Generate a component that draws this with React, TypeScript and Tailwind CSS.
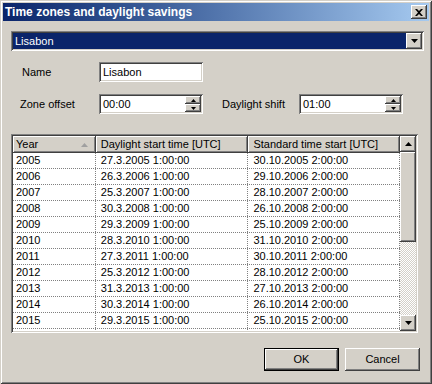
import React from 'react';

const raised =
  'shadow-[inset_-1px_-1px_#404040,inset_1px_1px_#ffffff,inset_-2px_-2px_#808080,inset_2px_2px_#d4d0c8]';
const sunken =
  'shadow-[inset_1px_1px_#808080,inset_-1px_-1px_#ffffff,inset_2px_2px_#404040,inset_-2px_-2px_#d4d0c8]';

const rows = [
  ['2005', '27.3.2005 1:00:00', '30.10.2005 2:00:00'],
  ['2006', '26.3.2006 1:00:00', '29.10.2006 2:00:00'],
  ['2007', '25.3.2007 1:00:00', '28.10.2007 2:00:00'],
  ['2008', '30.3.2008 1:00:00', '26.10.2008 2:00:00'],
  ['2009', '29.3.2009 1:00:00', '25.10.2009 2:00:00'],
  ['2010', '28.3.2010 1:00:00', '31.10.2010 2:00:00'],
  ['2011', '27.3.2011 1:00:00', '30.10.2011 2:00:00'],
  ['2012', '25.3.2012 1:00:00', '28.10.2012 2:00:00'],
  ['2013', '31.3.2013 1:00:00', '27.10.2013 2:00:00'],
  ['2014', '30.3.2014 1:00:00', '26.10.2014 2:00:00'],
  ['2015', '29.3.2015 1:00:00', '25.10.2015 2:00:00'],
  ['', '', ''],
];

function Arrow({ up = false, color = '#000' }: { up?: boolean; color?: string }) {
  return (
    <svg width="7" height="4" viewBox="0 0 7 4">
      <path d={up ? 'M3.5 0 L7 4 L0 4 Z' : 'M0 0 L7 0 L3.5 4 Z'} fill={color} />
    </svg>
  );
}

function Spin() {
  return (
    <div className="flex flex-col ml-auto mr-[2px]">
      <div className={`w-[16px] h-[8px] bg-[#d4d0c8] flex items-center justify-center ${raised}`}>
        <svg width="5" height="3" viewBox="0 0 5 3"><path d="M2.5 0 L5 3 L0 3 Z" fill="#000" /></svg>
      </div>
      <div className={`w-[16px] h-[8px] bg-[#d4d0c8] flex items-center justify-center ${raised}`}>
        <svg width="5" height="3" viewBox="0 0 5 3"><path d="M0 0 L5 0 L2.5 3 Z" fill="#000" /></svg>
      </div>
    </div>
  );
}

function Field({ value, spin = false }: { value: string; spin?: boolean }) {
  return (
    <div className={`w-[104px] h-[20px] bg-white flex items-center pl-[4px] ${sunken}`}>
      <span>{value}</span>
      {spin && <Spin />}
    </div>
  );
}

export default function App() {
  return (
    <div
      className="w-[432px] h-[384px] bg-[#d4d0c8] p-[3px] text-[11px] leading-none text-black shadow-[inset_1px_1px_#d4d0c8,inset_-1px_-1px_#404040,inset_2px_2px_#ffffff,inset_-2px_-2px_#808080] overflow-hidden"
      style={{ fontFamily: '"Liberation Sans", Arial, sans-serif' }}
    >
      {/* title bar */}
      <div className="h-[18px] flex items-center bg-gradient-to-r from-[#0a246a] to-[#a6caf0] pl-[2px] pr-[2px]">
        <span className="text-white font-bold text-[12px]">Time zones and daylight savings</span>
        <div className={`ml-auto w-[16px] h-[14px] bg-[#d4d0c8] flex items-center justify-center ${raised}`}>
          <svg width="8" height="7" viewBox="0 0 8 7">
            <path d="M0 0 H2 L4 2 L6 0 H8 L5 3.5 L8 7 H6 L4 5 L2 7 H0 L3 3.5 Z" fill="#000" />
          </svg>
        </div>
      </div>

      {/* zone combo */}
      <div className={`mt-[10px] ml-[8px] w-[413px] h-[20px] bg-white flex items-center p-[2px] ${sunken}`}>
        <div className="flex-1 h-full bg-[#0a246a] text-white flex items-center pl-[2px]">Lisabon</div>
        <div className={`w-[16px] h-[16px] bg-[#d4d0c8] flex items-center justify-center ${raised}`}>
          <Arrow />
        </div>
      </div>

      {/* fields */}
      <div className="flex items-center mt-[11px] ml-[19px]">
        <span className="w-[77px]">Name</span>
        <Field value="Lisabon" />
      </div>
      <div className="flex items-center mt-[12px] ml-[17px]">
        <span className="w-[79px]">Zone offset</span>
        <Field value="00:00" spin />
        <span className="ml-[19px] w-[77px]">Daylight shift</span>
        <Field value="01:00" spin />
      </div>

      {/* table */}
      <div className={`mt-[20px] ml-[8px] w-[407px] h-[199px] bg-white p-[2px] flex ${sunken}`}>
        <div className="flex-1 flex flex-col overflow-hidden">
          <div className="flex h-[17px] shrink-0">
            <div className={`w-[83px] bg-[#d4d0c8] flex items-center pl-[3px] pr-[8px] ${raised}`}>
              <span>Year</span>
              <span className="ml-auto"><Arrow up color="#a0a0a0" /></span>
            </div>
            <div className={`w-[153px] bg-[#d4d0c8] flex items-center pl-[5px] ${raised}`}>Daylight start time [UTC]</div>
            <div className={`w-[152px] bg-[#d4d0c8] flex items-center pl-[5px] ${raised}`}>Standard time start [UTC]</div>
          </div>
          {rows.map((r, i) => (
            <div key={i} className="flex h-[16px] shrink-0 border-b border-dotted border-[#808080]">
              <div className="w-[83px] pl-[3px] flex items-center border-r border-dotted border-[#808080]">{r[0]}</div>
              <div className="w-[153px] pl-[5px] flex items-center border-r border-dotted border-[#808080]">{r[1]}</div>
              <div className="w-[152px] pl-[5px] flex items-center border-r border-dotted border-[#808080]">{r[2]}</div>
            </div>
          ))}
        </div>
        {/* scrollbar */}
        <div className="w-[16px] flex flex-col">
          <div className={`h-[16px] bg-[#d4d0c8] flex items-center justify-center ${raised}`}>
            <Arrow up />
          </div>
          <div className={`h-[90px] bg-[#d4d0c8] ${raised}`} />
          <div className="flex-1 bg-[repeating-conic-gradient(#d4d0c8_0_25%,#ffffff_0_50%)] bg-[length:2px_2px]" />
          <div className={`h-[16px] bg-[#d4d0c8] flex items-center justify-center ${raised}`}>
            <Arrow />
          </div>
        </div>
      </div>

      {/* buttons */}
      <div className="flex justify-end gap-[6px] mt-[15px] mr-[9px]">
        <div className="w-[75px] h-[23px] border border-black">
          <div className={`w-full h-full bg-[#d4d0c8] flex items-center justify-center ${raised}`}>OK</div>
        </div>
        <div className={`w-[75px] h-[23px] bg-[#d4d0c8] flex items-center justify-center ${raised}`}>Cancel</div>
      </div>
    </div>
  );
}
